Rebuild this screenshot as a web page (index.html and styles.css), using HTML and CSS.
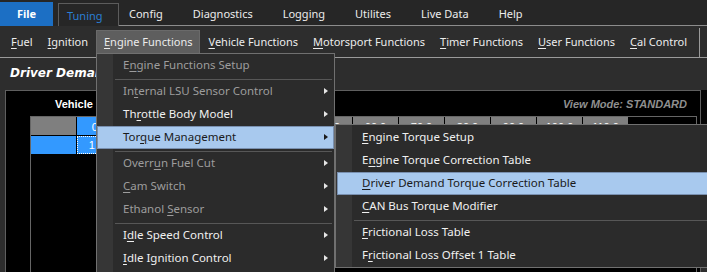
FILE: index.html
```html
<!DOCTYPE html>
<html lang="en">
    <head>
        <meta charset="UTF-8">
        <title>Driver Demand Torque Correction Table</title>
        <link rel="stylesheet" href="styles.css">
    </head>
    <body>

    <div class="ribbon">
        <div class="tab tab-file">File</div>
        <div class="tab tab-active">Tuning</div>
        <div class="tab">Config</div>
        <div class="tab">Diagnostics</div>
        <div class="tab">Logging</div>
        <div class="tab">Utilites</div>
        <div class="tab">Live Data</div>
        <div class="tab">Help</div>
        <div class="tab tab-fill"></div>
    </div>

    <div class="toolbar">
        <span class="tool"><u>F</u>uel</span>
        <span class="tool"><u>I</u>gnition</span>
        <span class="tool open"><u>E</u>ngine Functions</span>
        <span class="tool"><u>V</u>ehicle Functions</span>
        <span class="tool"><u>M</u>otorsport Functions</span>
        <span class="tool"><u>T</u>imer Functions</span>
        <span class="tool"><u>U</u>ser Functions</span>
        <span class="tool"><u>C</u>al Control</span>
        <span class="tool-sep"></span>
    </div>

    <div class="content">
        <div class="page-title">Driver Demand Torque Correction Table</div>
        <div class="panel-row">
            <div class="panel">
                <div class="panel-head">
                    <span class="axis-title">Vehicle Speed</span>
                    <span class="view-mode">View Mode: STANDARD</span>
                </div>
                <div class="grid">
                    <div class="cell corner"></div>
                    <div class="cell col-head sel">0.0</div>
                    <div class="cell col-head">10.0</div>
                    <div class="cell col-head">20.0</div>
                    <div class="cell col-head">30.0</div>
                    <div class="cell col-head">40.0</div>
                    <div class="cell col-head">50.0</div>
                    <div class="cell col-head">60.0</div>
                    <div class="cell col-head">70.0</div>
                    <div class="cell col-head">80.0</div>
                    <div class="cell col-head">90.0</div>
                    <div class="cell col-head">100.0</div>
                    <div class="cell col-head">110.0</div>
                    <div class="cell"></div>

                    <div class="cell row-head sel"></div>
                    <div class="cell value focus">1.00</div>
                    <div class="cell value">1.00</div>
                    <div class="cell value">1.00</div>
                    <div class="cell value">1.00</div>
                    <div class="cell value">1.00</div>
                    <div class="cell value">1.00</div>
                </div>
            </div>
            <div class="side"></div>
        </div>
    </div>

    <!-- Engine Functions dropdown -->
    <div class="menu main-menu">
        <div class="item off">E<u>n</u>gine Functions Setup</div>
        <div class="sep"></div>
        <div class="item off sub">In<u>t</u>ernal LSU Sensor Control</div>
        <div class="item sub">Th<u>r</u>ottle Body Model</div>
        <div class="item sub hot">Tor<u>q</u>ue Management</div>
        <div class="sep"></div>
        <div class="item off sub">Overr<u>u</u>n Fuel Cut</div>
        <div class="item off sub"><u>C</u>am Switch</div>
        <div class="item off sub">Ethanol <u>S</u>ensor</div>
        <div class="sep"></div>
        <div class="item sub">I<u>d</u>le Speed Control</div>
        <div class="item sub"><u>I</u>dle Ignition Control</div>
        <div class="sep"></div>
    </div>

    <!-- Torque Management submenu -->
    <div class="menu sub-menu">
        <div class="item"><u>E</u>ngine Torque Setup</div>
        <div class="item">E<u>n</u>gine Torque Correction Table</div>
        <div class="item hot"><u>D</u>river Demand Torque Correction Table</div>
        <div class="item"><u>C</u>AN Bus Torque Modifier</div>
        <div class="sep"></div>
        <div class="item"><u>F</u>rictional Loss Table</div>
        <div class="item">F<u>r</u>ictional Loss Offset 1 Table</div>
    </div>

    </body>
</html>
```

FILE: styles.css
```css
* {
    box-sizing: border-box;
    margin: 0;
    padding: 0;
}
body {
    position: relative;
    width: 707px;
    height: 272px;
    overflow: hidden;
    background-color: #2d2d2d;
    font-family: "Noto Sans", "Open Sans", sans-serif;
    font-size: 11px;
    color: #ececec;
}
u {
    text-underline-offset: 2px;
}

/* top ribbon tabs */
.ribbon {
    display: flex;
    align-items: flex-end;
    height: 26px;
    background-color: #262626;
}
.tab {
    height: 26px;
    line-height: 28px;
    padding: 0 20px 0 10px;
    border-bottom: 1px solid #8c8c8c;
    white-space: nowrap;
}
.tab-file {
    width: 53px;
    height: 24px;
    line-height: 24px;
    margin-right: 5px;
    padding: 0;
    text-align: center;
    font-weight: bold;
    color: #fff;
    background-color: #1c6fc4;
    border-bottom: none;
}
.tab-active {
    width: 61px;
    height: 23px;
    line-height: 23px;
    padding: 0 0 0 8px;
    color: #2a7fd4;
    border: 1px solid #5c5c5c;
    border-bottom: none;
}
.tab-fill {
    flex: 1;
    padding: 0;
}

/* second row: tuning functions */
.toolbar {
    display: flex;
    align-items: center;
    height: 32px;
    padding-left: 4px;
    background-color: #2d2d2d;
    border-bottom: 1px solid #9a9a9a;
}
.tool {
    height: 23px;
    line-height: 23px;
    padding: 0 7px;
    margin-right: 1px;
    white-space: nowrap;
}
.tool.open {
    background-color: #5e5e5e;
    border: 1px solid #6a6a6a;
    border-bottom: none;
    line-height: 21px;
}
.tool-sep {
    width: 1px;
    height: 29px;
    margin-left: 4px;
    margin-top: 2px;
    background-color: #9a9a9a;
}

/* table page */
.content {
    padding-left: 5px;
}
.page-title {
    height: 32px;
    line-height: 31px;
    padding-left: 5px;
    font-family: "DejaVu Sans", sans-serif;
    font-size: 12px;
    font-weight: bold;
    font-style: italic;
    color: #fff;
    white-space: nowrap;
}
.panel-row {
    display: flex;
}
.panel {
    width: 696px;
    height: 190px;
    background-color: #000;
    border: 1px solid #5f5f5f;
    padding: 0 3px 0 24px;
}
.side {
    width: 6px;
    height: 36px;
    background-color: #050505;
}
.panel-head {
    display: flex;
    justify-content: space-between;
    align-items: center;
    height: 25px;
    padding: 1px 10px 0 25px;
    font-family: "Liberation Sans", sans-serif;
    font-weight: bold;
    white-space: nowrap;
}
.axis-title {
    color: #fff;
    font-size: 11px;
}
.view-mode {
    color: #8f8f8f;
    font-size: 11px;
    font-style: italic;
}
.grid {
    display: grid;
    grid-template-columns: repeat(13, 45px) 1fr;
    grid-auto-rows: 18px;
    gap: 1px;
    height: 160px;
    background-color: #000;
    border-top: 1px solid #666;
    border-left: 1px solid #666;
    border-right: 1px solid #666;
    font-family: "Liberation Sans", sans-serif;
    font-size: 11px;
}
.cell {
    line-height: 18px;
    text-align: center;
    color: #fff;
}
.col-head {
    line-height: 20px;
}
.corner, .col-head {
    background-color: #7f7f7f;
}
.sel {
    background-color: #3399ff;
}
.value.focus {
    background-color: #3399ff;
    border: 1px dotted #fff;
    line-height: 16px;
}

/* dropdown menus */
.menu {
    position: absolute;
    font-size: 11.5px;
    background-color: #2b2b2b;
    background-image: linear-gradient(to right, #363636 16px, transparent 16px);
    border: 1px solid #707070;
}
.main-menu {
    left: 96px;
    top: 53px;
    width: 239px;
}
.sub-menu {
    left: 335px;
    top: 124px;
    width: 400px;
    padding-top: 1px;
}
.item {
    position: relative;
    height: 23px;
    line-height: 22px;
    padding-left: 26px;
    white-space: nowrap;
    color: #f0f0f0;
}
.item.off {
    color: #9d9d9d;
}
.item.sub::after {
    content: "";
    position: absolute;
    right: 6px;
    top: 8px;
    border-left: 4px solid #e6e6e6;
    border-top: 3.5px solid transparent;
    border-bottom: 3.5px solid transparent;
}
.item.hot {
    background-color: #a8c9ee;
    border: 1px solid #7990b0;
    padding-left: 25px;
    line-height: 20px;
    color: #1a1a1a;
}
.item.hot::after {
    right: 5px;
    top: 7px;
    border-left-color: #1a1a1a;
}
.sub-menu .item.hot {
    margin-left: 1px;
    padding-left: 24px;
}
.sep {
    height: 3px;
    margin: 0 2px 0 18px;
    border-bottom: 1px solid #575757;
    padding-top: 1px;
}
```
